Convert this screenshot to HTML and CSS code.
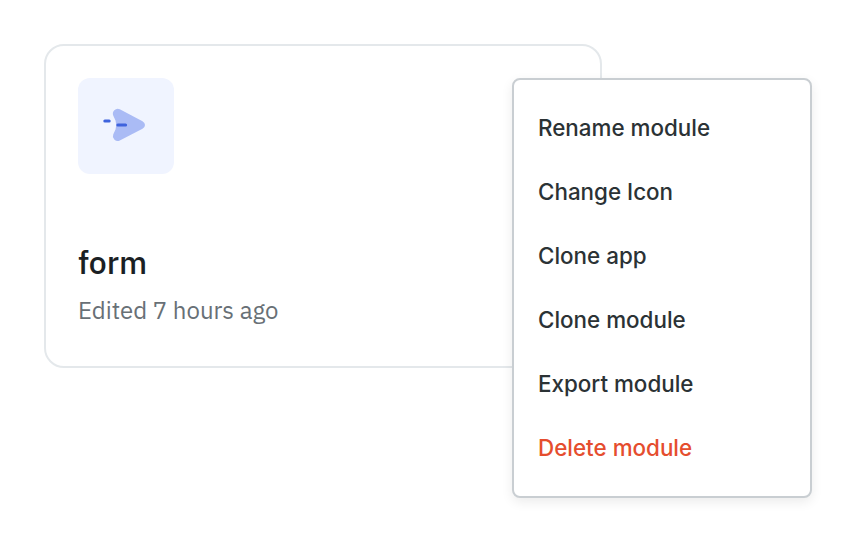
FILE: index.html
```
<!DOCTYPE html>
<html lang="en">
<head>
<meta charset="utf-8">
<title>Modules</title>
<link rel="stylesheet" href="styles.css">
</head>
<body>
<article class="card">
  <div class="card-icon">
    <svg width="48" height="48" viewBox="0 0 48 48" fill="none">
      <path d="M17.800 7.200L40.500 19.200Q43 20.700 43 23Q43 25.300 40.500 26.800L17.800 38.600Q14.800 40 12.300 37.500Q10 35 11.300 32.200L13.500 27.500Q15 23 13.500 18.500L11.300 13.800Q10 10.600 12.300 8.200Q14.800 5.700 17.800 7.200Z" fill="#aabbf5"/>
      <path d="M2.800 19h4.400M15.800 23h7.800" stroke="#3e63dd" stroke-width="3" stroke-linecap="round"/>
    </svg>
  </div>
  <h2 class="card-title">form</h2>
  <p class="card-meta">Edited 7 hours ago</p>
</article>
<ul class="menu">
  <li><span>Rename module</span></li>
  <li><span>Change Icon</span></li>
  <li><span>Clone app</span></li>
  <li><span>Clone module</span></li>
  <li><span>Export module</span></li>
  <li class="danger"><span>Delete module</span></li>
</ul>
</body>
</html>
```
FILE: styles.css
```
* { box-sizing: border-box; }
body { margin: 0; padding: 44px; height: 542px; background: #fff; overflow: hidden; font-family: Inter, sans-serif; }
.card { width: 558px; height: 324px; padding: 32px; border: 2px solid #e4e8eb; border-radius: 20px; }
.card-icon { width: 96px; height: 96px; border-radius: 12px; background: #f0f4ff; display: flex; align-items: center; justify-content: center; }
.card-title { margin: 68px 0 0; font: 500 32px/40px "IBM Plex Sans", Roboto, sans-serif; color: #1b1f24; }
.card-meta { margin: 12px 0 0; font: 400 24px/32px "IBM Plex Sans", Roboto, sans-serif; color: #687076; }
.menu { position: absolute; left: 512px; top: 78px; width: 300px; height: 420px; margin: 0; padding: 15px 24px; list-style: none; background: #fff; border: 2px solid #c9ced2; border-radius: 8px; box-shadow: 0 4px 12px rgba(0,0,0,.08); }
.menu li { height: 64px; display: flex; align-items: center; font-size: 22.4px; font-weight: 500; color: #2b3235; white-space: nowrap; }
.menu .danger { color: #e54d2e; }
```
